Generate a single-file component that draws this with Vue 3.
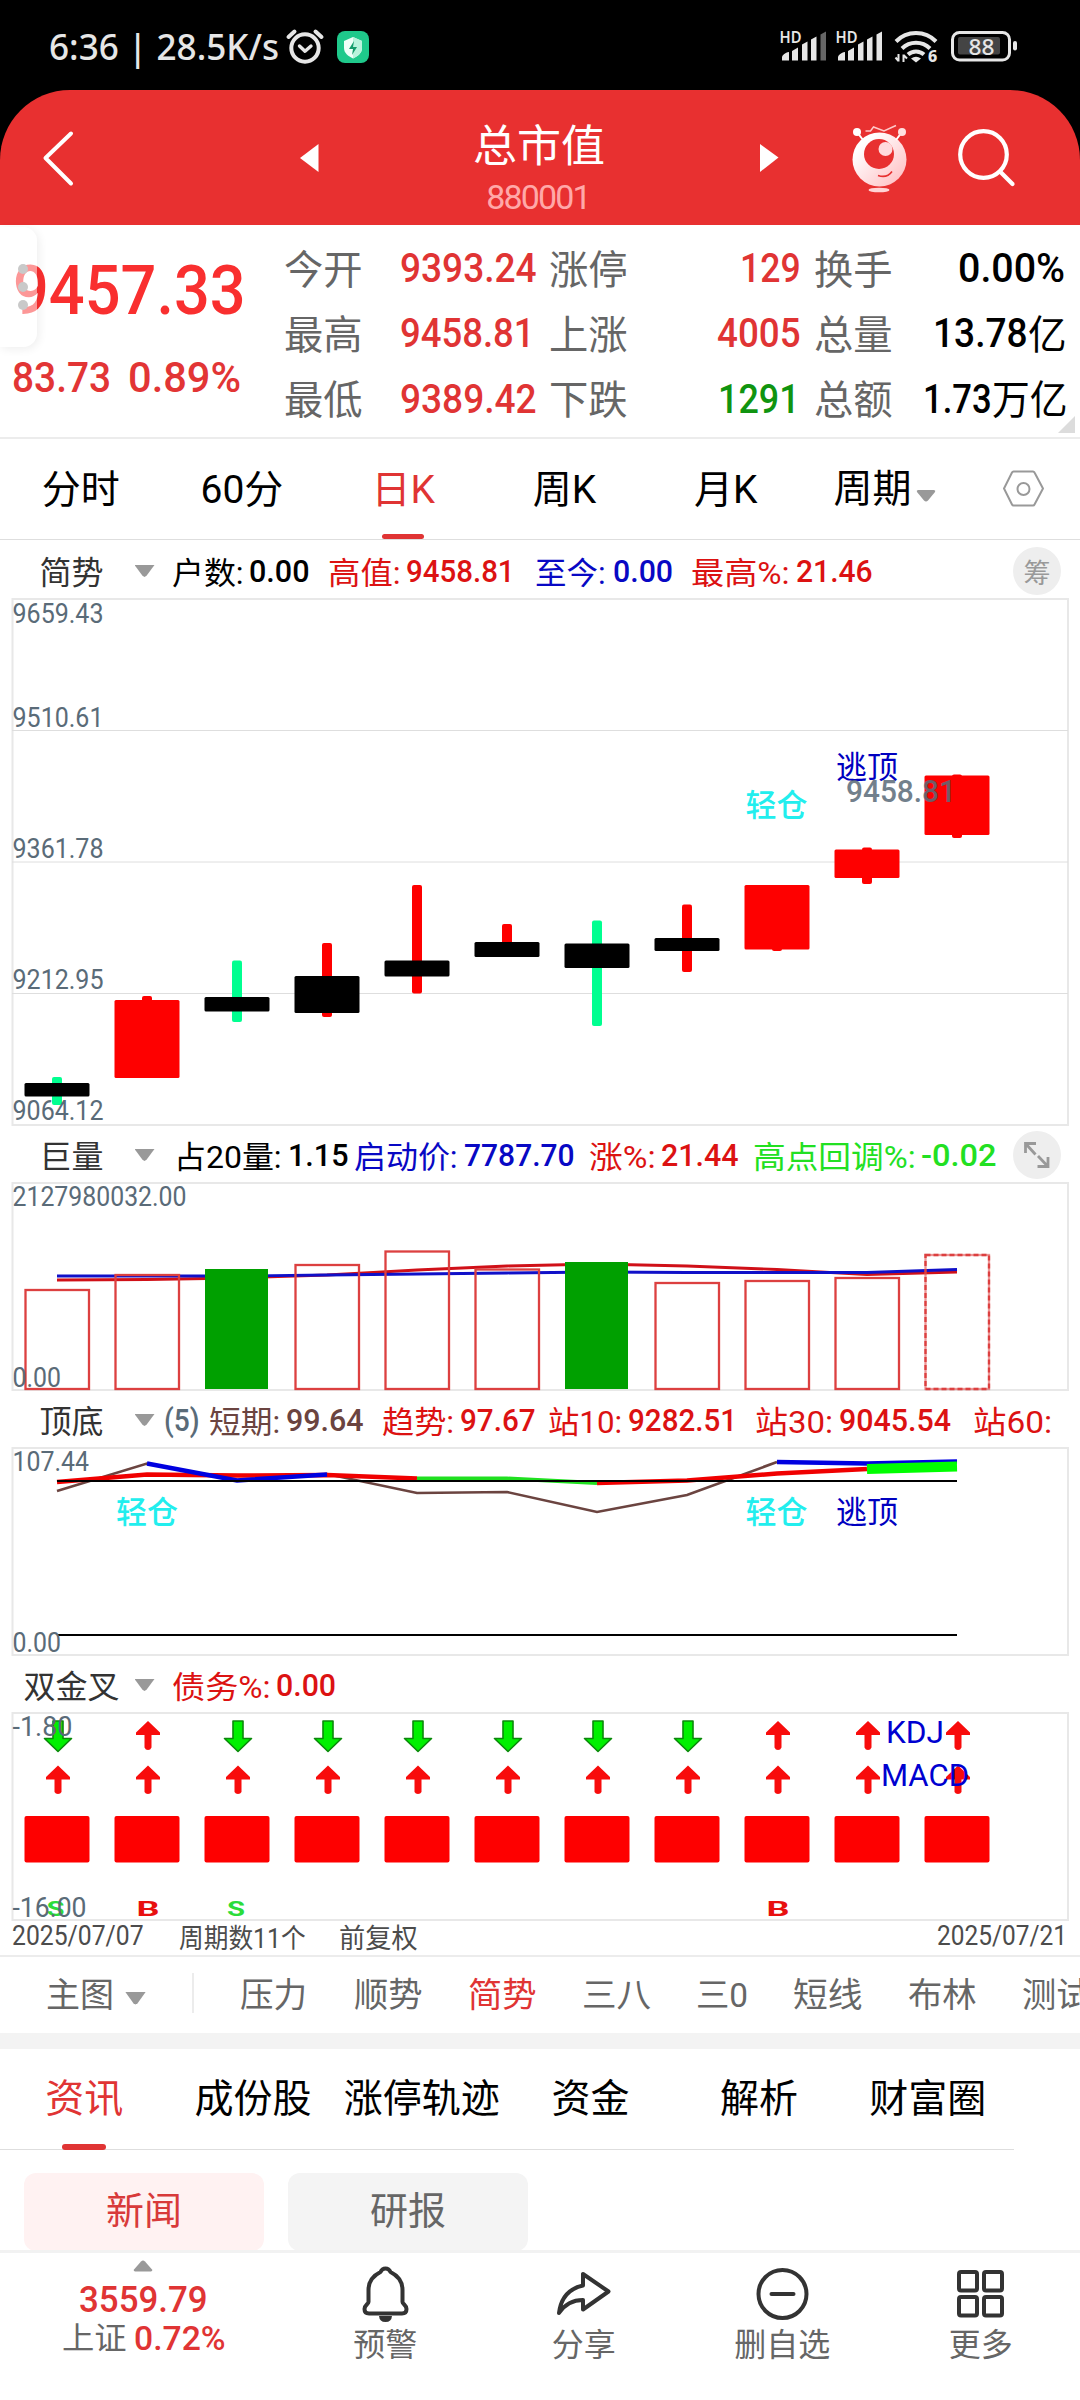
<script setup>
// Sizes a label to its column: spaces it from the previous one and condenses the glyphs.
const vFit = {
  mounted(el, { value }) {
    const natural = el.getBoundingClientRect().width
    el.style.marginLeft = value.gap + 'px'
    el.style.transform = `scaleX(${value.width / natural})`
    el.style.marginRight = value.width - natural + 'px'
  },
}

// [text, left, right, class] -> label with gap and width
const PAD = 1.3
function row(items, start = 0) {
  let cursor = start
  return items.map(([text, left, right, cls]) => {
    const num = /^[-\d.%()]+$/.test(text)
    const cell = { text, cls: [cls, { num }], fit: { gap: left - PAD - cursor, width: right - left + 2 * PAD } }
    cursor = right + PAD
    return cell
  })
}

const quoteMain = row([['9457.33', 14, 244]])
const quoteSub = row([['83.73', 13, 109.5], ['0.89%', 129.5, 240]])
const stats = [
  row([['今开', 285, 361, 'lab'], ['9393.24', 401, 535, 'up'], ['涨停', 550, 626, 'lab'], ['129', 741, 799, 'up'], ['换手', 815, 891, 'lab'], ['0.00%', 959.5, 1064]], 244),
  row([['最高', 285, 361, 'lab'], ['9458.81', 401, 533, 'up'], ['上涨', 550, 626, 'lab'], ['4005', 718, 799, 'up'], ['总量', 815, 891, 'lab'], ['13.78', 934, 1026], ['亿', 1029, 1065, 'cjk']], 244),
  row([['最低', 285, 361, 'lab'], ['9389.42', 401, 535, 'up'], ['下跌', 550, 626, 'lab'], ['1291', 719, 798, 'down'], ['总额', 815, 891, 'lab'], ['1.73', 924, 990], ['万亿', 993, 1066, 'cjk']], 244),
]
const periods = ['分时', '60分', '日K', '周K', '月K']

const ind1 = row([['户数:', 174, 243], ['0.00', 251, 309], ['高值:', 329.5, 399.5, 'red'], ['9458.81', 408, 514, 'red'], ['至今:', 537, 605, 'blue'], ['0.00', 614.5, 672, 'blue'], ['最高%:', 692.5, 788.5, 'red'], ['21.46', 797.5, 871.5, 'red']], 155)
const ind2 = row([['占20量:', 176, 281], ['1.15', 290, 348], ['启动价:', 356, 457, 'blue'], ['7787.70', 465.5, 573.5, 'blue'], ['涨%:', 591, 655, 'red'], ['21.44', 663, 738, 'red'], ['高点回调%:', 755, 915, 'green'], ['-0.02', 923, 996, 'green']], 155)
const ind3 = row([['(5)', 166, 199, 'slate'], ['短期:', 211, 279.5, 'brown'], ['99.64', 288, 363, 'brown'], ['趋势:', 383.5, 453, 'red'], ['97.67', 461.5, 534.5, 'red'], ['站10:', 549.5, 621, 'red'], ['9282.51', 629.5, 736, 'red'], ['站30:', 757, 832.5, 'red'], ['9045.54', 841, 950.5, 'red'], ['站60:', 974.5, 1051, 'red']], 155)
const ind4 = row([['债务%:', 174, 270, 'red'], ['0.00', 278, 335.5, 'red']], 155)
const dates = row([['2025/07/07', 13, 142], ['周期数11个', 180, 304], ['前复权', 340, 416], ['2025/07/21', 938.5, 1066]])
const formulas = row([['压力', 241, 305.5], ['顺势', 355, 421], ['简势', 469, 535, 'on'], ['三八', 583, 649.5], ['三0', 697, 746.5], ['短线', 794, 861], ['布林', 909, 975], ['测试', 1023, 1089]], 194)
const infoTabs = ['资讯', '成份股', '涨停轨迹', '资金', '解析', '财富圈']

const cx = (i) => 57 + 90 * i
const R = '#fe0000', G = '#00ff90', K = '#000'
// body top, body bottom, wick top, wick bottom, body colour, wick colour
const candles = [
  [1083, 1096.5, 1077, 1105, K, G], [1000, 1078, 996, 1078, R, R], [997, 1011.5, 960.5, 1022, K, G],
  [976, 1013, 943, 1017, K, R], [960.5, 976.5, 885, 993.5, K, R], [942, 957, 924, 957, K, R],
  [943.5, 968, 920.5, 1026, K, G], [938, 951, 904.5, 972, K, R], [885, 949.5, 885, 951, R, R],
  [849.5, 878, 847.5, 884, R, R], [775.5, 835, 774.5, 838, R, R],
]
const grid = [730.5, 862, 993.5]
const axis = [['9659.43', 622.5], ['9510.61', 727], ['9361.78', 857.5], ['9212.95', 988.5], ['9064.12', 1119.5]]
const vol = [1290, 1275, 1269, 1265, 1251.5, 1269.5, 1262, 1283, 1281, 1278, 1255]
const line = (ys, from = 0) => ys.map((y, i) => `${cx(from + i)},${y}`).join(' ')
const falls = [0, 2, 3, 4, 5, 6, 7]
const rises = [1, 8, 9, 10]
const marks = [['S', 46.5, '#2bdc3a'], ['B', 136.5, '#e81010'], ['S', 227, '#2bdc3a'], ['B', 766.5, '#e81010']]
</script>

<template>
  <div class="app">
    <div class="top">
      <div class="status">
        <span v-for="c in row([['6:36 | 28.5K/s', 50.5, 278]])" :key="c.text" v-fit="c.fit" class="t">{{ c.text }}</span>
        <svg class="alarm" width="38" height="38" viewBox="286 28 38 38" fill="none" stroke="#e6e6e6" stroke-width="4" stroke-linecap="round">
          <circle cx="305" cy="48" r="13.7" /><path d="M299.5 46l5.5 5.2 6-5.2" stroke-linejoin="round" stroke-width="3.4" /><path d="M288.5 37l6-5.5M315.5 31.5l6 5.500" />
        </svg>
        <svg class="shield" width="32" height="32" viewBox="0 0 32 32">
          <rect width="32" height="32" rx="8" fill="#1fc98b" /><path d="M16 6l9 4v7c0 5-4 8-9 10.500c-5-2.500-9-5.500-9-10.500v-7z" fill="#effff8" /><path d="M16 6l9 4v7c0 5-4 8-9 10.500z" fill="#b9f3dc" /><path d="M17 10l-5 8h4l-1 6 5-8h-4z" fill="#159c6b" />
        </svg>
        <svg class="sys" width="240" height="36" viewBox="780 30 240 36" fill="#e6e6e6">
          <g v-for="(dx, n) in [0, 56]" :key="dx" :transform="`translate(${dx} 0)`">
            <text x="780.5" y="43.500" font-size="15.500" font-weight="600" textLength="22" lengthAdjust="spacingAndGlyphs">HD</text>
            <path d="M783 61.500v-3c0-2 3-5 7-5.500v8.500zM793 61.500v-9.500l6-3.500v13zM803 61.500v-16l5.500-3v19zM812 61.500v-21l5.500-3v24z" />
            <path d="M821.500 61.500v-26l5.500-3v29z" :fill="n ? '#e6e6e6' : '#666'" />
          </g>
          <g fill="none" stroke="#e6e6e6" stroke-width="4">
            <path d="M897 42.500a28 28 0 0 1 40 0" /><path d="M903 49.500a20 20 0 0 1 28 0" /><path d="M909 55.500a12 12 0 0 1 16 0" />
          </g>
          <path d="M912 59.500q5-3.500 10 0l-5 4z" />
          <path d="M899.500 55v7.500M899.500 62l-3-3.500M904.500 63v-7.500M904.500 56l3.500 3.500" stroke="#e6e6e6" stroke-width="2" />
          <text x="929" y="63" font-size="16" font-weight="800">6</text>
          <rect x="953.500" y="33.500" width="57" height="27.500" rx="7" fill="none" stroke="#e6e6e6" stroke-width="3" />
          <rect x="959" y="38" width="42" height="17.500" rx="2" fill="#444" /><rect x="1014" y="42" width="4" height="9.500" rx="2" />
          <text x="969.500" y="55.500" font-size="22" font-weight="500" textLength="26" lengthAdjust="spacingAndGlyphs">88</text>
        </svg>
      </div>
      <header class="head">
        <svg class="back" width="34" height="60" viewBox="42 127 34 60" fill="none" stroke="#fff" stroke-width="4" stroke-linecap="round" stroke-linejoin="round"><path d="M71 132.500L45.500 157 71 182.500" /></svg>
        <svg class="prev" width="19" height="28" viewBox="0 0 19 28"><path d="M0 14L18.500 0v28z" fill="#fff" /></svg>
        <div class="title"><b>总市值</b><small>880001</small></div>
        <svg class="next" width="19" height="28" viewBox="0 0 19 28"><path d="M18.500 13.500L0 0v28z" fill="#fff" /></svg>
        <svg class="bot" width="60" height="70" viewBox="850 122 60 70">
          <defs><linearGradient id="face" x1="0" y1="0" x2="1" y2="1"><stop offset=".2" stop-color="#fff" /><stop offset="1" stop-color="#ffb9bd" /></linearGradient></defs>
          <circle cx="879.500" cy="158.500" r="27" fill="url(#face)" />
          <circle cx="879" cy="153" r="15" fill="#e83030" /><circle cx="885.500" cy="148" r="7" fill="#ffdadc" />
          <path d="M878 174.500q9 3 14-4" fill="none" stroke="#e83030" stroke-width="1.600" />
          <path d="M857 131l6 8M902 131l-6 8" stroke="#fff" stroke-width="2" /><circle cx="857" cy="131" r="4" fill="#fff" /><circle cx="902" cy="131" r="4" fill="#ffe0e0" />
          <path d="M865.500 130h5l3-4 10.500 4 12-5.500" fill="none" stroke="#ffc9c9" stroke-width="1.500" />
          <ellipse cx="879" cy="189" rx="10.500" ry="2.300" fill="#ffd4d6" />
        </svg>
        <svg class="find" width="60" height="62" viewBox="956 127 60 62" fill="none" stroke="#fff" stroke-width="4.200" stroke-linecap="round"><circle cx="983.500" cy="154.500" r="23.300" /><path d="M1001 172.500l11.500 11.500" /></svg>
      </header>
    </div>

    <section class="quote">
      <div class="price">
        <div class="line big"><span v-for="c in quoteMain" :key="c.text" v-fit="c.fit" class="t">{{ c.text }}</span></div>
        <div class="line sub"><span v-for="c in quoteSub" :key="c.text" v-fit="c.fit" class="t" :class="c.cls">{{ c.text }}</span></div>
      </div>
      <div class="stats">
        <div v-for="(r, i) in stats" :key="i" class="line"><span v-for="c in r" :key="c.text" v-fit="c.fit" class="t" :class="c.cls">{{ c.text }}</span></div>
      </div>
      <div class="handle"><i /><i /><i /></div>
      <i class="corner" />
    </section>

    <nav class="periods">
      <span v-for="p in periods" :key="p" class="p" :class="{ on: p === '日K' }">{{ p }}</span>
      <span class="more">周期<svg width="20" height="12" viewBox="0 0 20 12"><path d="M2 0h16q2 .5 1 2l-7 8.500q-2 2-4 0l-7-8.500q-1-1.500 1-2z" fill="#999" /></svg></span>
      <svg class="gear" width="42" height="38" viewBox="1002 471 42 38" fill="none" stroke="#999" stroke-width="2"><path d="M1013.500 472.500h19.500q1 0 1.500 1l8.500 16-8.500 16q-.5 1-1.500 1h-19.500q-1 0-1.500-1l-8-16 8-16q.5-1 1.500-1z" /><circle cx="1023.500" cy="490" r="6" /></svg>
    </nav>

    <div class="ind i1">
      <span class="name">简势</span><i class="caret" />
      <span v-for="c in ind1" :key="c.text + c.fit.gap" v-fit="c.fit" class="t" :class="c.cls">{{ c.text }}</span>
      <span class="badge">筹</span>
    </div>
    <svg class="chart" width="1080" height="528" viewBox="0 598 1080 528">
      <rect x="12.500" y="599" width="1055.500" height="526" fill="#fff" stroke="#e8e8e8" stroke-width="2" />
      <line v-for="y in grid" :key="y" x1="12" x2="1068" :y1="y" :y2="y" stroke="#dedede" />
      <g v-for="(c, i) in candles" :key="i">
        <rect :x="cx(i) - 5" :y="c[2]" width="10" :height="c[3] - c[2]" rx="2" :fill="c[5]" />
        <rect :x="cx(i) - 32.500" :y="c[0]" width="65" :height="c[1] - c[0]" rx="1.500" :fill="c[4]" />
      </g>
      <text v-for="a in axis" :key="a[0]" x="12.500" :y="a[1]" class="ax" textLength="91" lengthAdjust="spacingAndGlyphs">{{ a[0] }}</text>
      <text x="745.500" y="815.500" class="tag cyan">轻仓</text>
      <text x="836" y="778" class="tag navy">逃顶</text>
      <text x="846" y="801.500" class="ax hi" textLength="110" lengthAdjust="spacingAndGlyphs">9458.81</text>
    </svg>

    <div class="ind i2">
      <span class="name">巨量</span><i class="caret" />
      <span v-for="c in ind2" :key="c.text" v-fit="c.fit" class="t" :class="c.cls">{{ c.text }}</span>
      <span class="badge"><svg width="26" height="26" viewBox="0 0 26 26" fill="none" stroke="#999" stroke-width="2.800"><path d="M1.500 11V1.500H12M2 2l9.500 10.500M24 15v9.500H13.500M23.500 24L14 14" /></svg></span>
    </div>
    <svg class="chart" width="1080" height="209" viewBox="0 1182 1080 209">
      <rect x="12.500" y="1183" width="1055.500" height="207" fill="#fff" stroke="#e8e8e8" stroke-width="2" />
      <polyline :points="line([1280, 1279.500, 1278, 1275, 1270, 1266, 1264, 1266, 1269.500, 1274.500, 1272])" fill="none" stroke="#d01018" stroke-width="2.800" />
      <polyline :points="line([1276, 1276, 1276, 1275, 1274, 1273, 1272, 1272.500, 1272.500, 1272.500, 1269.500])" fill="none" stroke="#1010c8" stroke-width="2.800" />
      <template v-for="(y, i) in vol" :key="i">
        <rect v-if="i === 2 || i === 6" :x="cx(i) - 32" :y="y" width="63" :height="1389 - y" fill="#00a000" />
        <g v-else fill="none" stroke="#dc4040" stroke-width="2.300">
          <rect :x="cx(i) - 31.500" :y="y" width="63.500" :height="1389 - y" :opacity="i === 10 ? 0.55 : 1" />
          <rect v-if="i === 10" :x="cx(i) - 31.500" :y="y" width="63.500" :height="1389 - y" stroke-dasharray="5 3" />
        </g>
      </template>
      <text x="12.500" y="1206" class="ax" textLength="174" lengthAdjust="spacingAndGlyphs">2127980032.00</text>
      <text x="12.500" y="1386.500" class="ax" textLength="48.500" lengthAdjust="spacingAndGlyphs">0.00</text>
    </svg>

    <div class="ind i3">
      <span class="name">顶底</span><i class="caret" />
      <span v-for="c in ind3" :key="c.text" v-fit="c.fit" class="t" :class="c.cls">{{ c.text }}</span>
    </div>
    <svg class="chart" width="1080" height="209" viewBox="0 1447 1080 209">
      <rect x="12.500" y="1448" width="1055.500" height="207" fill="#fff" stroke="#e8e8e8" stroke-width="2" />
      <g fill="none">
        <polyline :points="line([1491, 1463.500, 1480, 1474, 1493, 1492, 1512, 1495, 1462])" stroke="#6b4440" stroke-width="2.600" />
        <polyline :points="line([1482, 1474.500, 1475.500, 1475, 1478.500])" stroke="#f00000" stroke-width="4.500" />
        <polyline :points="line([1478.500, 1478.500, 1483], 4)" stroke="#20e020" stroke-width="4" />
        <polyline :points="line([1483, 1480.500, 1473.500, 1469], 6)" stroke="#f00000" stroke-width="4.500" />
        <polyline :points="line([1463.500, 1480.500, 1474.500], 1)" stroke="#0000e0" stroke-width="4.500" />
        <polyline :points="line([1462, 1463.500, 1461.500], 8)" stroke="#0000e0" stroke-width="4.500" />
        <polyline :points="line([1469, 1466.500], 9)" stroke="#00ff00" stroke-width="10" />
        <path d="M57 1481H957" stroke="#000" stroke-width="2.200" /><path d="M57 1635H957" stroke="#000" stroke-width="1.800" />
      </g>
      <text x="12.500" y="1471" class="ax" textLength="76.500" lengthAdjust="spacingAndGlyphs">107.44</text>
      <text x="12.500" y="1652" class="ax" textLength="48.500" lengthAdjust="spacingAndGlyphs">0.00</text>
      <text x="116" y="1522.500" class="tag cyan">轻仓</text><text x="745.500" y="1522.500" class="tag cyan">轻仓</text><text x="836" y="1522.500" class="tag navy">逃顶</text>
    </svg>

    <div class="ind i4">
      <span class="name">双金叉</span><i class="caret" />
      <span v-for="c in ind4" :key="c.text" v-fit="c.fit" class="t" :class="c.cls">{{ c.text }}</span>
    </div>
    <svg class="chart" width="1080" height="209" viewBox="0 1712 1080 209">
      <rect x="12.500" y="1713" width="1055.500" height="207" fill="#fff" stroke="#e8e8e8" stroke-width="2" />
      <g fill="#00f000" stroke="#0a8a0a" stroke-width="1.600" stroke-linejoin="round">
        <path v-for="i in falls" :key="i" :transform="`translate(${cx(i) + 1} 0)`" d="M-5 1721H5v17.500h8.500L0 1751.500l-13.500-13H-5z" />
      </g>
      <g fill="#f80c0c">
        <path v-for="i in rises" :key="i" :transform="`translate(${cx(i) + 1} 0)`" d="M0 1721l12 11.500v2.500H3.500v12.500q-1 2.500-3.500 2.500t-3.500-2.500V1735h-8.500v-2.500z" />
        <path v-for="i in 11" :key="'m' + i" :transform="`translate(${cx(i - 1) + 1} 44.500)`" d="M0 1721l12 11.500v2.500H3.500v12.500q-1 2-3.500 2t-3.500-2V1735h-8.500v-2.500z" />
        <rect v-for="i in 11" :key="'b' + i" :x="cx(i - 1) - 32.500" y="1816" width="65" height="46.500" rx="2" fill="#fe0000" />
      </g>
      <text v-for="m in marks" :key="m[1]" :x="m[1]" y="1916" font-size="20" font-weight="700" :fill="m[2]" :textLength="m[0] === 'S' ? 18 : 23" lengthAdjust="spacingAndGlyphs">{{ m[0] }}</text>
      <text x="12.500" y="1735.500" class="ax" textLength="60" lengthAdjust="spacingAndGlyphs">-1.80</text>
      <text x="12.500" y="1916.500" class="ax" textLength="74" lengthAdjust="spacingAndGlyphs">-16.00</text>
      <text x="886" y="1742.500" class="sig" textLength="58" lengthAdjust="spacingAndGlyphs">KDJ</text>
      <text x="881" y="1786" class="sig" textLength="88" lengthAdjust="spacingAndGlyphs">MACD</text>
    </svg>
    <div class="dates"><span v-for="c in dates" :key="c.text" v-fit="c.fit" class="t">{{ c.text }}</span></div>

    <div class="formulas">
      <span class="main">主图</span><i class="caret lg" /><i class="sep" />
      <span v-for="c in formulas" :key="c.text" v-fit="c.fit" class="t" :class="c.cls">{{ c.text }}</span>
    </div>
    <div class="band" />
    <nav class="info"><span v-for="(t, i) in infoTabs" :key="t" :class="{ on: i === 0 }">{{ t }}</span></nav>
    <div class="chips"><span class="chip on">新闻</span><span class="chip">研报</span></div>

    <footer class="bar">
      <div class="index">
        <svg width="20" height="12" viewBox="0 0 20 12"><path d="M2 11.500h16q2-.5 1-2l-7-8q-2-2-4 0l-7 8q-1 1.500 1 2z" fill="#999" /></svg>
        <b><span v-for="c in row([['3559.79', 80, 206]])" :key="c.text" v-fit="c.fit" class="t">{{ c.text }}</span></b>
        <p><span v-for="c in row([['上证', 63, 125, 'lab'], ['0.72%', 135, 224]])" :key="c.text" v-fit="c.fit" class="t" :class="c.cls">{{ c.text }}</span></p>
      </div>
      <div class="act">
        <svg width="56" height="56" viewBox="358 2266 56 56" fill="none" stroke="#333" stroke-width="4" stroke-linejoin="round"><path d="M386.500 2269q3.500 0 5 3.500c8 4 12 9.500 12 18v12c0 2 4 3 4 7q0 4.500-4.500 4.500h-33q-4.500 0-4.500-4.500c0-4 4-5 4-7v-12c0-8.500 4-14 12-18q1.500-3.500 5-3.500z" transform="translate(0 -1.500)" /><path d="M380 2315h13q-.5 6-6.500 6t-6.500-6z" fill="#333" stroke="none" /></svg>
        <span>预警</span>
      </div>
      <div class="act">
        <svg width="56" height="56" viewBox="556.500 2266 56 56" fill="none" stroke="#333" stroke-width="4" stroke-linejoin="round"><path d="M583.500 2273v11.500c-14 3-22 12-24 27.500 6-9 13-13 24-13v9.500l25.500-18z" /></svg>
        <span>分享</span>
      </div>
      <div class="act">
        <svg width="56" height="56" viewBox="754.500 2266 56 56" fill="none" stroke="#333" stroke-width="4" stroke-linecap="round"><circle cx="783" cy="2293" r="24" /><path d="M772 2293h22" /></svg>
        <span>删自选</span>
      </div>
      <div class="act">
        <svg width="56" height="56" viewBox="953 2267 56 56" fill="none" stroke="#333" stroke-width="4"><rect x="959" y="2272" width="18" height="18.500" rx="2" /><rect x="984" y="2272" width="18" height="18.500" rx="2" /><rect x="959" y="2297" width="18" height="18.500" rx="2" /><rect x="984" y="2297" width="18" height="18.500" rx="2" /></svg>
        <span>更多</span>
      </div>
    </footer>
  </div>
</template>

<style>
body { background: #fff; overflow: hidden; }
</style>

<style scoped>
.app { width: 1080px; height: 2400px; display: flex; flex-direction: column; overflow: hidden; background: #fff; color: #000; font-family: Roboto, "Noto Sans CJK SC", sans-serif; white-space: nowrap; box-sizing: border-box; }
.app * { box-sizing: border-box; }
.app > * { flex: none; }
.t { display: block; flex: none; transform-origin: 0 50%; white-space: pre; }
.num { font-weight: 500; }
svg { display: block; flex: none; overflow: visible; }
.top { background: #000; }
.status { height: 90px; display: flex; align-items: center; padding-top: 4px; color: #e6e6e6; font: 500 36px/40px "Noto Sans", sans-serif; }
.alarm { margin-left: 6.500px; }
.shield { margin-left: 13.500px; }
.sys { margin-left: 410px; font-family: "Noto Sans", sans-serif; }
.head { height: 135px; background: #e83030; border-radius: 70px 70px 0 0; display: flex; align-items: center; color: #fff; }
.back { margin-left: 42px; }
.prev { margin-left: 223.500px; }
.title { width: 441px; display: flex; flex-direction: column; align-items: center; }
.title b { font-weight: 400; font-size: 44px; line-height: 54px; margin-top: 21px; }
.title small { font-size: 34px; line-height: 40px; margin-top: 3px; margin-left: -2px; color: #ffa8a8; letter-spacing: -1.900px; }
.bot { margin-left: 71px; }
.find { margin-left: 46px; }

.quote { position: relative; height: 214px; display: flex; border-bottom: 2px solid #ececec; }
.price { width: 244px; display: flex; flex-direction: column; }
.line { display: flex; align-items: center; }
.big { height: 132px; font-size: 68px; color: #f92f2f; font-weight: 500; }
.sub { height: 41px; font-size: 42px; color: #e23535; }
.stats { display: flex; flex-direction: column; padding-top: 11px; font-size: 40px; }
.stats .line { height: 65.300px; }
.lab { color: #666; padding-bottom: 4px; }
.cjk { padding-bottom: 4px; }
.up { color: #e03434; }
.down { color: #109410; }
.handle { position: absolute; left: 0; top: 2px; width: 37px; height: 120px; border-radius: 0 14px 14px 0; background: rgba(255,255,255,.5); box-shadow: 2px 2px 10px rgba(0,0,0,.07); display: flex; flex-direction: column; align-items: center; justify-content: center; gap: 8px; padding-left: 8px; }
.handle i { width: 10px; height: 10px; border-radius: 50%; background: #c9c9c9; }
.corner { position: absolute; right: 5px; bottom: 4px; width: 17px; height: 17px; background: #dcdcdc; clip-path: polygon(100% 0, 100% 100%, 0 100%); }

.periods { height: 101px; display: flex; align-items: center; border-bottom: 1px solid #dedede; font-size: 39px; }
.p { width: 161.300px; height: 100px; line-height: 102px; text-align: center; display: flex; flex-direction: column; align-items: center; }
.p.on { color: #e03434; }
.p.on::after { content: ""; width: 42px; height: 6px; border-radius: 3px; background: #e03434; margin-top: -7px; }
.more { display: flex; align-items: center; width: 160px; padding-left: 27px; line-height: 104px; }
.more svg { margin: 13px 0 0 4px; }
.gear { margin-left: 35.500px; }

.ind { display: flex; align-items: center; font-size: 31px; }
.ind .t:not(.num), .name { padding-bottom: 2px; }
.i1 { height: 58px; padding-top: 4px; }
.i2, .i3, .i4 { height: 56px; padding-top: 2px; }
.name { flex: none; display: flex; justify-content: center; width: 143px; margin-right: -8.500px; font-size: 32px; color: #333; }
.caret { flex: none; width: 20px; height: 12px; background: #999; clip-path: polygon(0 0, 100% 0, 60% 90%, 50% 100%, 40% 90%); }
.badge { flex: none; width: 48px; height: 48px; border-radius: 50%; background: #eee; color: #999; font-size: 27px; display: flex; align-items: center; justify-content: center; margin-left: auto; margin-right: 19px; }
.red { color: #dc1212; }
.blue { color: #0808c4; }
.green { color: #22e022; }
.brown { color: #6b4440; }
.slate { color: #5a6b78; }
.ax { font-size: 27px; fill: #5a6b78; }
.hi { font-size: 31px; font-weight: 500; opacity: .85; }
.tag { font-size: 31px; }
.cyan { fill: #22eeee; font-weight: 500; }
.navy { fill: #0000c0; }
.sig { font-size: 31px; fill: #0000d0; }
.dates { height: 34px; display: flex; align-items: center; font-size: 27px; color: #4c4c4c; padding-bottom: 4px; }

.formulas { height: 78px; border-top: 2px solid #ececec; display: flex; align-items: center; font-size: 34px; color: #666; overflow: hidden; padding-bottom: 5px; }
.main { flex: none; margin-left: 46px; width: 79px; }
.caret.lg { width: 21px; height: 13px; margin-top: 11px; }
.sep { flex: none; width: 2px; height: 40px; background: #ececec; margin-left: 46px; }
.on { color: #e03434; }
.band { height: 16px; background: #f3f3f3; }
.info { width: 1014px; height: 101px; display: flex; border-bottom: 1px solid #dedede; font-size: 39px; }
.info span { width: 168.700px; height: 101px; line-height: 101px; display: flex; flex-direction: column; align-items: center; }
.info .on::after { content: ""; width: 44px; height: 6px; border-radius: 3px; background: #e03434; margin-top: -6px; }
.chips { display: flex; gap: 24px; padding: 23px 24px 0; height: 100px; }
.chip { width: 240px; height: 78px; border-radius: 12px; background: #f4f4f4; color: #666; font-size: 38px; line-height: 77px; text-align: center; }
.chip.on { background: #fff2f2; color: #d83a3a; }
.bar { height: 151px; border-top: 3px solid #f2f2f2; display: flex; background: #fff; }
.index { width: 286px; display: flex; flex-direction: column; color: #e03434; }
.index > svg { margin: 7px 0 0 133px; }
.index b { display: flex; font-weight: 500; font-size: 37px; line-height: 40px; margin-top: 8px; }
.index p { display: flex; margin: 0; font-size: 33px; line-height: 38px; align-items: center; }
.index .lab { font-size: 31px; padding-bottom: 0; }
.act { width: 198.500px; display: flex; flex-direction: column; align-items: center; padding-top: 14px; font-size: 32px; color: #666; line-height: 40px; }
.act span { margin-top: 2px; }
</style>
